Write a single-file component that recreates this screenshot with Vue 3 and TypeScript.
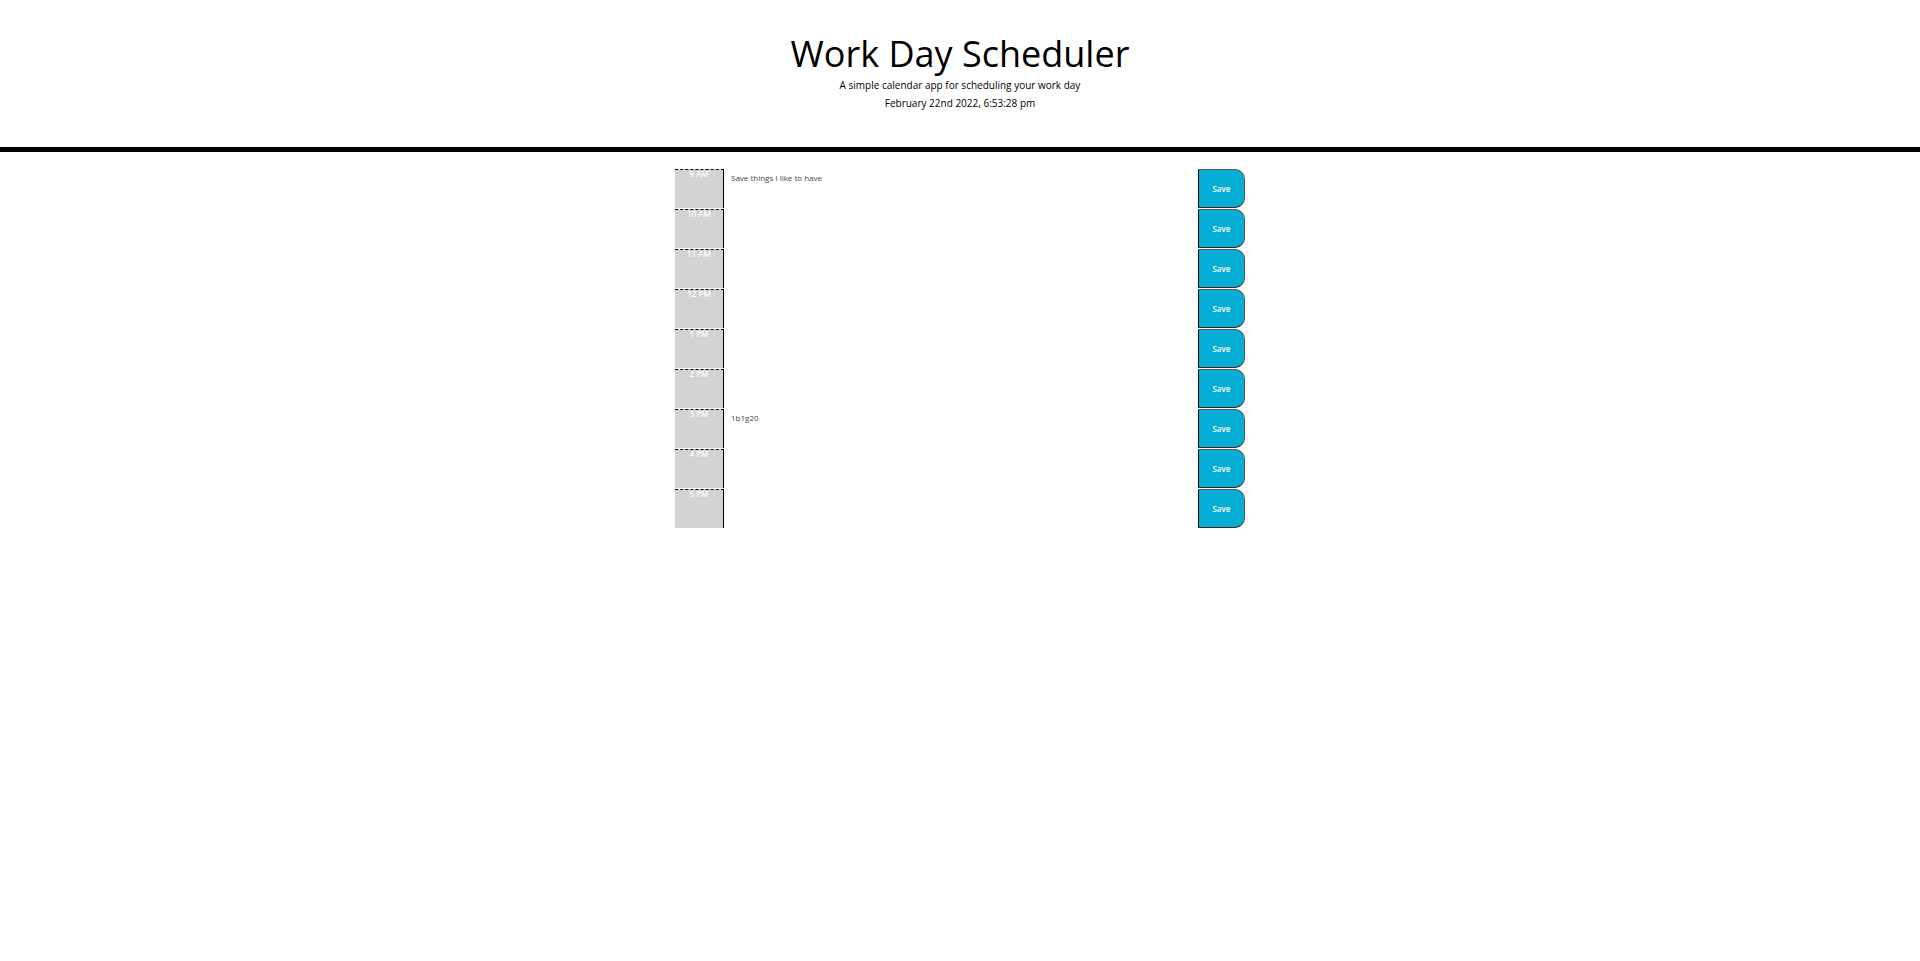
<script setup lang="ts">
import { ref } from 'vue'

interface HourRow {
  label: string
  note: string
}

const hours = ref<HourRow[]>([
  { label: '9 AM', note: 'Save things I like to have' },
  { label: '10 AM', note: '' },
  { label: '11 AM', note: '' },
  { label: '12 PM', note: '' },
  { label: '1 PM', note: '' },
  { label: '2 PM', note: '' },
  { label: '3 PM', note: '1b1g20' },
  { label: '4 PM', note: '' },
  { label: '5 PM', note: '' }
])
</script>

<template>
  <header class="jumbotron">
    <h1 class="title">Work Day Scheduler</h1>
    <p class="lead">A simple calendar app for scheduling your work day</p>
    <p class="today">February 22nd 2022, 6:53:28 pm</p>
  </header>
  <main class="container">
    <div v-for="row in hours" :key="row.label" class="row">
      <div class="hour">{{ row.label }}</div>
      <textarea v-model="row.note" class="description"></textarea>
      <button class="save-btn" type="button">Save</button>
    </div>
  </main>
</template>

<style>
body {
  background: #fff;
}
</style>

<style scoped>
.jumbotron {
  height: 147px;
  border-bottom: 5px solid #000;
  text-align: center;
  font-family: "Open Sans", sans-serif;
  color: #000;
}

.title {
  margin: 0;
  padding-top: 27px;
  font-size: 36px;
  font-weight: 400;
  line-height: 54px;
}

.lead {
  margin: -3px 0 0;
  font-size: 10px;
  line-height: 14px;
}

.today {
  margin: 4px 0 0;
  font-size: 10px;
  line-height: 14px;
}

.container {
  width: 570px;
  margin: 17px auto 0;
  font-family: "Open Sans", sans-serif;
}

.row {
  display: flex;
  height: 40px;
}

.hour {
  box-sizing: border-box;
  width: 49px;
  height: 39px;
  background: #d3d3d3;
  color: #fff;
  border-top: 1px dashed #000;
  border-right: 1px solid #000;
  font-size: 8px;
  font-weight: 600;
  line-height: 7px;
  text-align: center;
}

.description {
  flex: 1;
  box-sizing: border-box;
  height: 40px;
  border: none;
  outline: none;
  resize: none;
  background: #fff;
  color: #445;
  padding: 3px 7px;
  font-family: "Open Sans", sans-serif;
  font-size: 8px;
  line-height: 12px;
}

.save-btn {
  box-sizing: border-box;
  width: 47px;
  height: 39px;
  padding: 0;
  background: #06aed5;
  color: #fff;
  border: 1px solid #555;
  border-left-color: #000;
  border-bottom-color: #222;
  border-radius: 0 10px 10px 0;
  font-family: "Open Sans", sans-serif;
  font-size: 8px;
  font-weight: 600;
}
</style>
